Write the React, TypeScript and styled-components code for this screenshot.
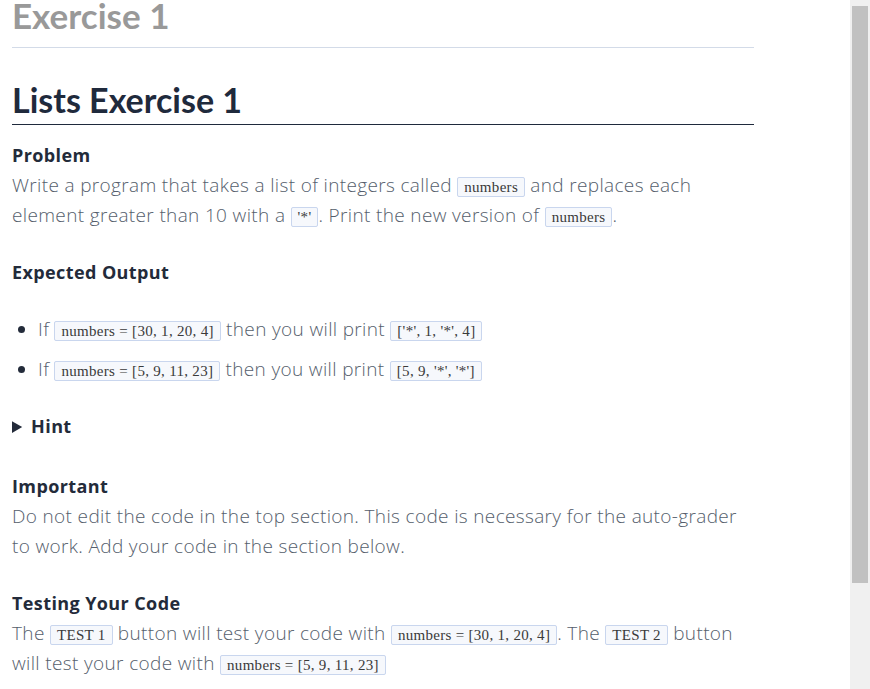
import { createGlobalStyle, styled } from "styled-components";

const GlobalStyle = createGlobalStyle`
  html, body {
    margin: 0;
    padding: 0;
    background: #ffffff;
    overflow: hidden;
  }
`;

/**
 * 연습문제 설명 페이지
 */
export default function App() {
  return (
    <>
      <GlobalStyle />
      <Page>
        <Content>
          <Title>Exercise 1</Title>
          <Rule />
          <Heading>Lists Exercise 1</Heading>

          <Section>
            <SubHeading>Problem</SubHeading>
            <Text>
              Write a program that takes a list of integers called <Code>numbers</Code> and
              replaces each element greater than 10 with a <Code>'*'</Code>. Print the new
              version of <Code>numbers</Code>.
            </Text>
          </Section>

          <Section>
            <SubHeading>Expected Output</SubHeading>
            <Bullets>
              <li>
                If <Code>numbers = [30, 1, 20, 4]</Code> then you will print{" "}
                <Code>['*', 1, '*', 4]</Code>
              </li>
              <li>
                If <Code>numbers = [5, 9, 11, 23]</Code> then you will print{" "}
                <Code>[5, 9, '*', '*']</Code>
              </li>
            </Bullets>
          </Section>

          <Hint>
            <summary>Hint</summary>
          </Hint>

          <Section $gap={30}>
            <SubHeading>Important</SubHeading>
            <Text>
              Do not edit the code in the top section. This code is necessary for the
              auto-grader to work. Add your code in the section below.
            </Text>
          </Section>

          <Section>
            <SubHeading>Testing Your Code</SubHeading>
            <Text>
              The <Code>TEST 1</Code> button will test your code with{" "}
              <Code>numbers = [30, 1, 20, 4]</Code>. The <Code>TEST 2</Code> button will
              test your code with <Code>numbers = [5, 9, 11, 23]</Code>
            </Text>
          </Section>
        </Content>

        <ScrollTrack>
          <ScrollThumb />
        </ScrollTrack>
      </Page>
    </>
  );
}

const Page = styled.div`
  height: 689px;
  display: flex;
  overflow: hidden;
  font-family: "Open Sans", "Noto Sans", sans-serif;
`;

const Content = styled.div`
  flex: 1;
  padding-left: 12px;
  padding-right: 96px;
  overflow: hidden;
`;

const Title = styled.h1`
  margin: -3px 0 0;
  font-family: Lato, "Open Sans", sans-serif;
  font-size: 35px;
  line-height: 36px;
  font-weight: 700;
  color: #999999;
`;

const Rule = styled.hr`
  margin: 14px 0 0;
  border: none;
  border-top: 1px solid #d3dbe8;
`;

const Heading = styled.h2`
  margin: 32px 0 0;
  padding-bottom: 4px;
  font-family: Lato, "Open Sans", sans-serif;
  font-size: 34px;
  line-height: 40px;
  font-weight: 700;
  color: #1f2a3c;
  border-bottom: 1px solid #1f2a3c;
`;

const Section = styled.section<{ $gap?: number }>`
  margin-top: ${(p) => p.$gap ?? 27}px;

  &:first-of-type {
    margin-top: 15px;
  }
`;

const SubHeading = styled.h3`
  margin: 0;
  font-size: 18px;
  line-height: 30px;
  font-weight: 700;
  letter-spacing: 0.4px;
  color: #232b3a;
`;

const Text = styled.p`
  margin: 0;
  font-size: 19px;
  line-height: 30px;
  font-weight: 300;
  letter-spacing: 0.35px;
  color: #555e6c;
`;

const Bullets = styled.ul`
  margin: 27px 0 0;
  padding-left: 26px;
  font-size: 19px;
  line-height: 30px;
  font-weight: 300;
  letter-spacing: 0.35px;
  color: #555e6c;

  li + li {
    margin-top: 10px;
  }

  li::marker {
    color: #232b3a;
  }
`;

const Code = styled.code`
  font-family: "Liberation Serif", "Times New Roman", serif;
  font-size: 15px;
  line-height: 16px;
  font-weight: 400;
  letter-spacing: 0.3px;
  color: #3a3a3a;
  background: #f6f8fc;
  border: 1px solid #c9d6ee;
  border-radius: 2px;
  padding: 1px 6px;
`;

const Hint = styled.details`
  margin-top: 27px;
  font-size: 18px;
  line-height: 30px;
  font-weight: 700;
  letter-spacing: 0.4px;
  color: #232b3a;

  summary {
    cursor: pointer;
  }
`;

const ScrollTrack = styled.div`
  width: 20px;
  flex-shrink: 0;
  background: #f0f0f0;
  padding: 6px 2px 0;
  box-sizing: border-box;
`;

const ScrollThumb = styled.div`
  height: 577px;
  background: #c1c1c1;
`;
